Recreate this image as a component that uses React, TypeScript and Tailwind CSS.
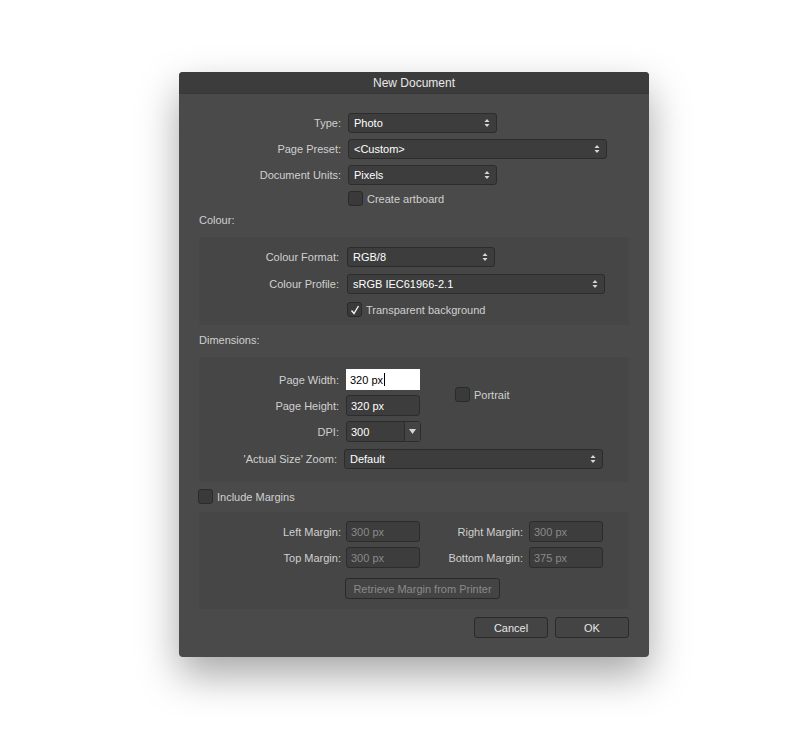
import React from "react";

const font = "font-['Liberation_Sans','Helvetica_Neue',Arial,sans-serif]";

function Updown() {
  return (
    <svg width="6" height="10" viewBox="0 0 6 10" className="shrink-0">
      <path d="M3 1 L5.5 4 L0.5 4 Z" fill="#d8d8d8" />
      <path d="M3 9 L5.5 6 L0.5 6 Z" fill="#d8d8d8" />
    </svg>
  );
}

function Select({ value, w }: { value: string; w: string }) {
  return (
    <div className={`${w} h-[20px] flex items-center justify-between rounded-[3px] border border-[#2c2c2c] bg-[#3d3d3d] pl-[5px] pr-[6px] text-[11px] text-white`}>
      <span>{value}</span>
      <Updown />
    </div>
  );
}

function Field({ value, disabled, active }: { value: string; disabled?: boolean; active?: boolean }) {
  if (active)
    return (
      <div className="w-[74px] h-[21px] flex items-center bg-white pl-[4px] text-[11px] text-black">
        <span>{value}</span>
        <span className="ml-px h-[13px] w-px bg-black" />
      </div>
    );
  return (
    <div className={`w-[74px] h-[21px] flex items-center rounded-[3px] border border-[#2c2c2c] bg-[#3d3d3d] pl-[4px] text-[11px] ${disabled ? "text-[#8a8a8a]" : "text-white"}`}>
      {value}
    </div>
  );
}

function Check({ on }: { on?: boolean }) {
  return (
    <div className="w-[15px] h-[15px] shrink-0 rounded-[3px] border border-[#2a2a2a] bg-[#3a3a3a] flex items-center justify-center">
      {on && (
        <svg width="10" height="10" viewBox="0 0 10 10">
          <path d="M1.5 5.5 L4 8.5 L8.5 1" fill="none" stroke="#f2f2f2" strokeWidth="1.4" />
        </svg>
      )}
    </div>
  );
}

function Row({ label, lw, gap, className, children }: { label: string; lw: string; gap: string; className?: string; children: React.ReactNode }) {
  return (
    <div className={`flex items-center ${className ?? ""}`}>
      <div className={`${lw} ${gap} text-right text-[11px] text-[#d0d0d0]`}>{label}</div>
      {children}
    </div>
  );
}

function Button({ label, w, disabled }: { label: string; w: string; disabled?: boolean }) {
  return (
    <div className={`${w} h-[21px] flex items-center justify-center rounded-[3px] border border-[#2a2a2a] bg-[#444444] text-[11px] ${disabled ? "text-[#8a8a8a]" : "text-[#e6e6e6]"}`}>
      {label}
    </div>
  );
}

export default function App() {
  return (
    <div className={`min-h-[750px] w-[805px] bg-white pt-[72px] pl-[179px] leading-[14px] ${font}`}>
      <div className="w-[470px] h-[585px] rounded-[4px] bg-[#4a4a4a] shadow-[0_18px_40px_rgba(0,0,0,0.35)] overflow-hidden">
        <div className="h-[22px] flex items-center justify-center bg-[#3c3c3c] text-[12px] text-[#e8e8e8] border-b border-[#383838]">
          New Document
        </div>

        <div className="px-[20px] pt-[19px]">
          <Row label="Type:" lw="w-[142px]" gap="mr-[7px]">
            <Select value="Photo" w="w-[149px]" />
          </Row>
          <Row label="Page Preset:" lw="w-[142px]" gap="mr-[7px]" className="mt-[6px]">
            <Select value="<Custom>" w="w-[259px]" />
          </Row>
          <Row label="Document Units:" lw="w-[142px]" gap="mr-[7px]" className="mt-[6px]">
            <Select value="Pixels" w="w-[149px]" />
          </Row>
          <div className="mt-[6px] flex items-center pl-[149px]">
            <Check />
            <span className="ml-[4px] text-[11px] text-[#d0d0d0]">Create artboard</span>
          </div>

          <div className="mt-[7px] text-[11px] text-[#d0d0d0]">Colour:</div>
          <div className="mt-[10px] w-[430px] rounded-[2px] bg-[#464646] pt-[10px] pb-[8px]">
            <Row label="Colour Format:" lw="w-[140px]" gap="mr-[8px]">
              <Select value="RGB/8" w="w-[148px]" />
            </Row>
            <Row label="Colour Profile:" lw="w-[140px]" gap="mr-[8px]" className="mt-[7px]">
              <Select value="sRGB IEC61966-2.1" w="w-[258px]" />
            </Row>
            <div className="mt-[8px] flex items-center pl-[148px]">
              <Check on />
              <span className="ml-[4px] text-[11px] text-[#d0d0d0]">Transparent background</span>
            </div>
          </div>

          <div className="mt-[8px] text-[11px] text-[#d0d0d0]">Dimensions:</div>
          <div className="mt-[10px] w-[430px] rounded-[2px] bg-[#464646] pt-[12px] pb-[13px]">
            <div className="flex items-center">
              <div>
                <Row label="Page Width:" lw="w-[140px]" gap="mr-[7px]">
                  <Field value="320 px" active />
                </Row>
                <Row label="Page Height:" lw="w-[140px]" gap="mr-[7px]" className="mt-[5px]">
                  <Field value="320 px" />
                </Row>
              </div>
              <div className="ml-[35px] mt-[4px] flex items-center">
                <Check />
                <span className="ml-[4px] text-[11px] text-[#d0d0d0]">Portrait</span>
              </div>
            </div>
            <Row label="DPI:" lw="w-[140px]" gap="mr-[7px]" className="mt-[5px]">
              <div className="w-[75px] h-[21px] flex rounded-[3px] border border-[#2c2c2c] bg-[#3d3d3d] text-[11px] text-white">
                <div className="flex-1 flex items-center pl-[4px]">300</div>
                <div className="w-[16px] flex items-center justify-center border-l border-[#2c2c2c] bg-[#444444]">
                  <svg width="7" height="5" viewBox="0 0 7 5">
                    <path d="M0 0 L7 0 L3.5 5 Z" fill="#d8d8d8" />
                  </svg>
                </div>
              </div>
            </Row>
            <Row label="'Actual Size' Zoom:" lw="w-[138px]" gap="mr-[7px]" className="mt-[7px]">
              <Select value="Default" w="w-[259px]" />
            </Row>
          </div>

          <div className="mt-[7px] -ml-[1px] flex items-center">
            <Check />
            <span className="ml-[4px] text-[11px] text-[#d0d0d0]">Include Margins</span>
          </div>

          <div className="mt-[8px] w-[430px] rounded-[2px] bg-[#464646] pt-[9px] pb-[10px]">
            <div className="flex items-center">
              <Row label="Left Margin:" lw="w-[142px]" gap="mr-[5px]">
                <Field value="300 px" disabled />
              </Row>
              <Row label="Right Margin:" lw="w-[103px]" gap="mr-[6px]">
                <Field value="300 px" disabled />
              </Row>
            </div>
            <div className="mt-[5px] flex items-center">
              <Row label="Top Margin:" lw="w-[142px]" gap="mr-[5px]">
                <Field value="300 px" disabled />
              </Row>
              <Row label="Bottom Margin:" lw="w-[103px]" gap="mr-[6px]">
                <Field value="375 px" disabled />
              </Row>
            </div>
            <div className="mt-[10px] pl-[146px]">
              <Button label="Retrieve Margin from Printer" w="w-[155px]" disabled />
            </div>
          </div>

          <div className="mt-[8px] flex justify-end gap-[7px]">
            <Button label="Cancel" w="w-[74px]" />
            <Button label="OK" w="w-[74px]" />
          </div>
        </div>
      </div>
    </div>
  );
}
